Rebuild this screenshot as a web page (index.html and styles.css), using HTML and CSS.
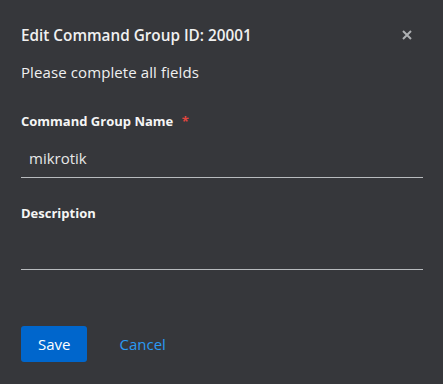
FILE: index.html
```html
<!DOCTYPE html>
<html>
<head>
  <title>Edit Command Group</title>
  <link rel="stylesheet" href="styles.css">
</head>
<body>
  <div class="modal">
    <div class="modal-header">
      <h1>Edit Command Group ID: 20001</h1>
      <button class="close" aria-label="Close">
        <svg width="10" height="10" viewBox="0 0 10 10"><path d="M1 1L9 9M9 1L1 9" stroke="currentColor" stroke-width="2"/></svg>
      </button>
    </div>
    <p class="description">Please complete all fields</p>

    <form id="groupForm">
      <div class="form-group">
        <label for="name">Command Group Name <span class="required">*</span></label>
        <input type="text" id="name" value="mikrotik">
      </div>
      <div class="form-group">
        <label for="desc">Description</label>
        <textarea id="desc"></textarea>
      </div>
      <div class="actions">
        <button type="submit" class="btn-primary">Save</button>
        <button type="button" class="btn-link">Cancel</button>
      </div>
    </form>
  </div>
</body>
</html>
```

FILE: styles.css
```css
body { margin: 0; background-color: #36373b; font-family: "Open Sans", "Noto Sans", sans-serif; color: #f0f0f0; }
.modal { padding: 23px 20px 0 21px; }
.modal-header { display: flex; align-items: center; justify-content: space-between; height: 24px; }
h1 { margin: 0; font-size: 15.3px; font-weight: 600; line-height: 24px; color: #f0f0f0; }
.close { background: none; border: none; color: #aeb0b3; padding: 0; margin-right: 8px; width: 16px; height: 16px; display: flex; align-items: center; justify-content: center; cursor: pointer; }
.description { margin: 15px 0 0; font-size: 15px; line-height: 21px; letter-spacing: 0.1px; }
.form-group { margin-top: 28px; }
.form-group + .form-group { margin-top: 25px; }
label { display: block; font-size: 13px; font-weight: 700; line-height: 21px; color: #f5f5f5; }
.required { color: #e0463f; margin-left: 5px; }
input, textarea { display: block; box-sizing: border-box; width: 100%; margin-top: 8px; background: transparent; border: none; border-bottom: 1px solid #b8bbbe; color: #e8e8e8; font-family: inherit; font-size: 15px; outline: none; }
input { height: 38px; padding: 0 8px 2px; }
textarea { height: 38px; resize: none; padding: 6px 8px; }
.actions { display: flex; align-items: center; gap: 16px; margin-top: 56px; }
.btn-primary { background-color: #0066cc; color: white; border: none; border-radius: 3px; height: 36px; padding: 0 17px; font-family: inherit; font-size: 15px; cursor: pointer; }
.btn-link { background: none; border: none; color: #2b9af3; font-family: inherit; font-size: 15px; padding: 0 16px; cursor: pointer; }
```
